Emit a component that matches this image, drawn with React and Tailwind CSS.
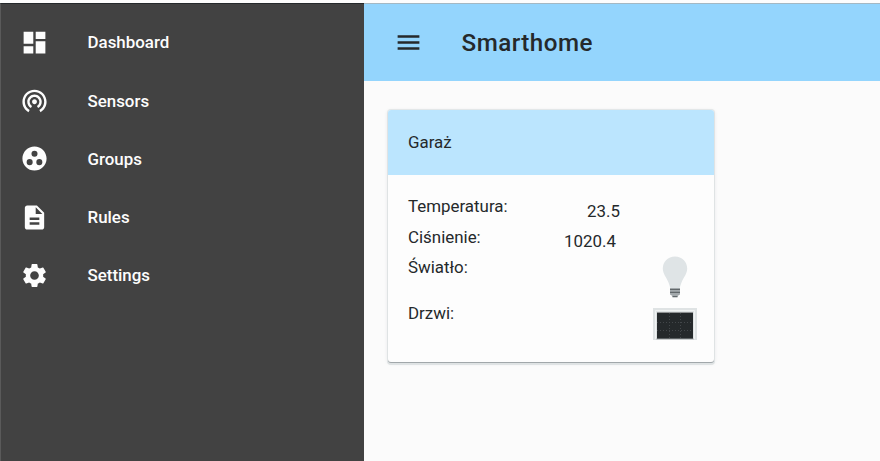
import React from 'react';
import { MdDashboard, MdWifiTethering, MdGroupWork, MdDescription, MdSettings, MdMenu } from 'react-icons/md';

const links = [
  { label: 'Dashboard', Icon: MdDashboard },
  { label: 'Sensors', Icon: MdWifiTethering },
  { label: 'Groups', Icon: MdGroupWork },
  { label: 'Rules', Icon: MdDescription },
  { label: 'Settings', Icon: MdSettings },
];

function Sidebar() {
  return (
    <nav className="w-[364px] shrink-0 border-t border-l border-t-[#25292b] border-l-[#5a5a5a] bg-[#424242] pt-[10px]">
      {links.map(({ label, Icon }) => (
        <a key={label} className="flex h-[58.2px] items-center pl-[18.5px] text-[#fdfdfd]">
          <Icon className="mb-[1px] size-[29px] shrink-0" />
          <span className="ml-[39px] text-[16.9px] font-medium">{label}</span>
        </a>
      ))}
    </nav>
  );
}

function Bulb() {
  return (
    <svg width="26" height="43" viewBox="0 0 26 43">
      <path d="M13 0.5C6 0.5 0.8 5.8 0.8 12.5c0 5.5 3.8 9 5.7 14 .8 2.2 1.200 3.600 1.900 5.500h9.200c.7-1.900 1.100-3.300 1.900-5.500 1.900-5 5.700-8.500 5.700-14C25.200 5.800 20 .5 13 .5z" fill="#dfe4e6" />
      <path d="M8 32h10v6.500l-2.500 1.500v1.500h-5V40L8 38.500z" fill="#a3a9ac" />
      <path d="M8 33.500h10M8 36.300h10M10.500 40.500h5" stroke="#62686b" strokeWidth="1.200" />
    </svg>
  );
}

function GarageDoor() {
  return (
    <svg width="44" height="32" viewBox="0 0 44 32">
      <path d="M0 0h44v32h-4V4H4v28H0z" fill="#dfe3e4" />
      <path d="M2.500 31V2.500h39V31" fill="none" stroke="#f1f3f3" strokeWidth="1" />
      <rect x="4" y="4.500" width="36" height="26.500" fill="#25292b" />
      <path d="M4 14.500h36M4 22.500h36M16.500 5v25M27.500 5v25" stroke="#43474a" strokeDasharray="1 2" />
      <path d="M3.500 31h37" stroke="#93999b" />
    </svg>
  );
}

function RoomCard() {
  return (
    <section className="h-[252px] w-[326px] overflow-hidden rounded-[3px] bg-[#fdfdfd] text-[16.9px] leading-5 text-[#25292b] shadow-[0_1px_0_#a1a7aa,0_2px_0_1px_#dfe3e4,0_0_0_1px_#e3e7e8,0_1px_4px_#dde0e1]">
      <h2 className="flex h-[65px] items-center bg-[#bbe5fe] pb-[2px] pl-5">Garaż</h2>
      <div className="flex justify-between pt-[21px] pr-[17px] pl-5">
        <div className="flex flex-col">
          <span className="h-[31px]">Temperatura:</span>
          <span className="h-[30px]">Ciśnienie:</span>
          <span className="h-[46px]">Światło:</span>
          <span>Drzwi:</span>
        </div>
        <div className="flex w-[133px] flex-col pt-[5px]">
          <span className="h-[30px] pl-[23px]">23.5</span>
          <span className="h-[25px]">1020.4</span>
          <div className="flex h-[52px] justify-end pr-[9px]"><Bulb /></div>
          <div className="flex justify-end"><GarageDoor /></div>
        </div>
      </div>
    </section>
  );
}

export default function App() {
  return (
    <div className="flex h-[461px] w-[880px] flex-col overflow-hidden bg-[#fdfdfd] pt-[3px] font-['Roboto',sans-serif]">
      <div className="flex flex-1">
        <Sidebar />
        <div className="flex flex-1 flex-col bg-[#fbfbfb]">
          <header className="flex h-[78px] items-center border-t border-[#a4b8c3] bg-[#94d5fd] pl-[29.5px] text-[#25292b]">
            <MdMenu className="size-[29px]" />
            <h1 className="ml-[39px] pt-px text-[24.2px] font-medium tracking-[0.02em]">Smarthome</h1>
          </header>
          <main className="pt-[29px] pl-6">
            <RoomCard />
          </main>
        </div>
      </div>
    </div>
  );
}
